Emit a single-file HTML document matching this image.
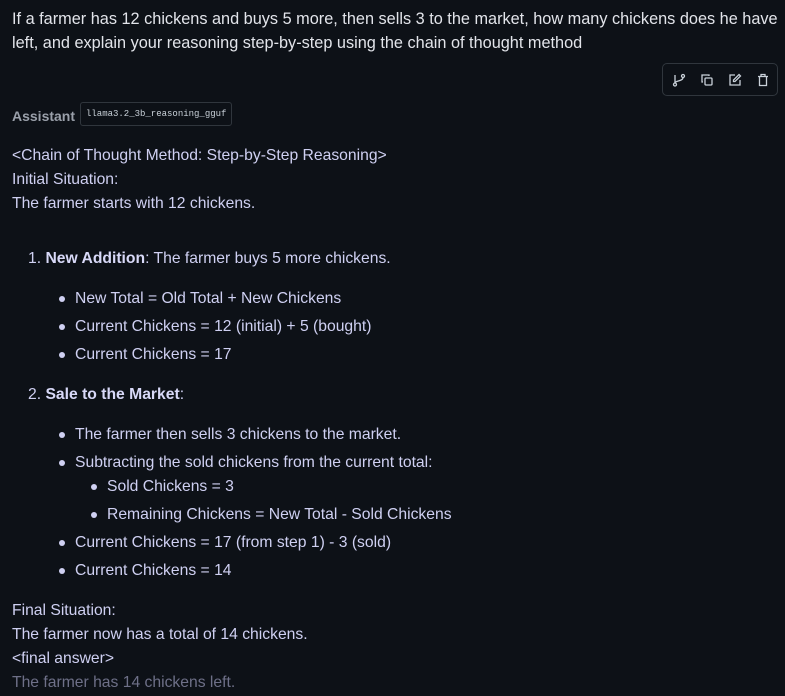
<!DOCTYPE html>
<html><head><meta charset="utf-8"><style>
html,body{margin:0;padding:0;background:#0d1117;width:785px;height:696px;overflow:hidden}
body{font-family:"Liberation Sans",sans-serif;font-size:15.7px;position:relative}
.l{position:absolute;white-space:nowrap;line-height:20px}
.q{color:#e2e4ea;font-size:16.3px}
.a{color:#cfd0f2}
b{font-weight:bold;color:#d8d9f8}
.dot{position:absolute;width:6px;height:6px;border-radius:50%;background:#cfd0f2}
.tb{position:absolute;left:662px;top:63px;width:116px;height:33px;border:1px solid #30363d;border-radius:5px;box-sizing:border-box}
.tb svg{position:absolute;top:9px}
.tag{position:absolute;left:80px;top:102px;width:152px;height:24px;border:1px solid #30363d;border-radius:3px;box-sizing:border-box;font-family:"Liberation Mono",monospace;font-size:9px;color:#c9d1d9;line-height:22px;padding-left:5px}
</style></head><body>
<div class="l q" style="left:12px;top:9px">If a farmer has 12 chickens and buys 5 more, then sells 3 to the market, how many chickens does he have</div>
<div class="l q" style="left:12px;top:33px">left, and explain your reasoning step-by-step using the chain of thought method</div>
<div class="tb">
<svg style="left:9px" width="14" height="14" viewBox="0 0 14 14" fill="none" stroke="#c9d1d9" stroke-width="1.3"><circle cx="3" cy="11.5" r="1.5"/><circle cx="11" cy="3" r="1.5"/><path d="M3 2v8M11 4.5c0 4-8 3-8 5.5"/></svg>
<svg style="left:37px" width="14" height="14" viewBox="0 0 14 14" fill="none" stroke="#c9d1d9" stroke-width="1.3"><rect x="5" y="5" width="7" height="7" rx="1"/><path d="M9 3V2H2v7h1"/></svg>
<svg style="left:65px" width="14" height="14" viewBox="0 0 14 14" fill="none" stroke="#c9d1d9" stroke-width="1.3"><path d="M7 2H2v10h10V7"/><path d="M11 1.5l1.5 1.5L7 8.5H5.5V7z"/></svg>
<svg style="left:93px" width="14" height="14" viewBox="0 0 14 14" fill="none" stroke="#c9d1d9" stroke-width="1.3"><path d="M2 3.5h10M5 3.5V1.5h4v2M3.5 3.5v9h7v-9"/></svg>
</div>
<div class="l" style="left:12px;top:106px;color:#9aa0aa;font-weight:bold;font-size:14px">Assistant</div>
<div class="tag">llama3.2_3b_reasoning_gguf</div>
<div class="l a" style="left:12px;top:146px">&lt;Chain of Thought Method: Step-by-Step Reasoning&gt;</div>
<div class="l a" style="left:12px;top:170px">Initial Situation:</div>
<div class="l a" style="left:12px;top:194px">The farmer starts with 12 chickens.</div>
<div class="l a" style="left:28px;top:249px">1. <b>New Addition</b>: The farmer buys 5 more chickens.</div>
<div class="dot" style="left:59px;top:296px"></div><div class="l a" style="left:75px;top:289px">New Total = Old Total + New Chickens</div>
<div class="dot" style="left:59px;top:324px"></div><div class="l a" style="left:75px;top:317px">Current Chickens = 12 (initial) + 5 (bought)</div>
<div class="dot" style="left:59px;top:352px"></div><div class="l a" style="left:75px;top:345px">Current Chickens = 17</div>
<div class="l a" style="left:28px;top:385px">2. <b>Sale to the Market</b>:</div>
<div class="dot" style="left:59px;top:432px"></div><div class="l a" style="left:75px;top:425px">The farmer then sells 3 chickens to the market.</div>
<div class="dot" style="left:59px;top:460px"></div><div class="l a" style="left:75px;top:453px">Subtracting the sold chickens from the current total:</div>
<div class="dot" style="left:91px;top:484px"></div><div class="l a" style="left:107px;top:477px">Sold Chickens = 3</div>
<div class="dot" style="left:91px;top:512px"></div><div class="l a" style="left:107px;top:505px">Remaining Chickens = New Total - Sold Chickens</div>
<div class="dot" style="left:59px;top:540px"></div><div class="l a" style="left:75px;top:533px">Current Chickens = 17 (from step 1) - 3 (sold)</div>
<div class="dot" style="left:59px;top:568px"></div><div class="l a" style="left:75px;top:561px">Current Chickens = 14</div>
<div class="l a" style="left:12px;top:601px">Final Situation:</div>
<div class="l a" style="left:12px;top:625px">The farmer now has a total of 14 chickens.</div>
<div class="l a" style="left:12px;top:649px">&lt;final answer&gt;</div>
<div class="l" style="left:12px;top:673px;color:#6e7088">The farmer has 14 chickens left.</div>
</body></html>
